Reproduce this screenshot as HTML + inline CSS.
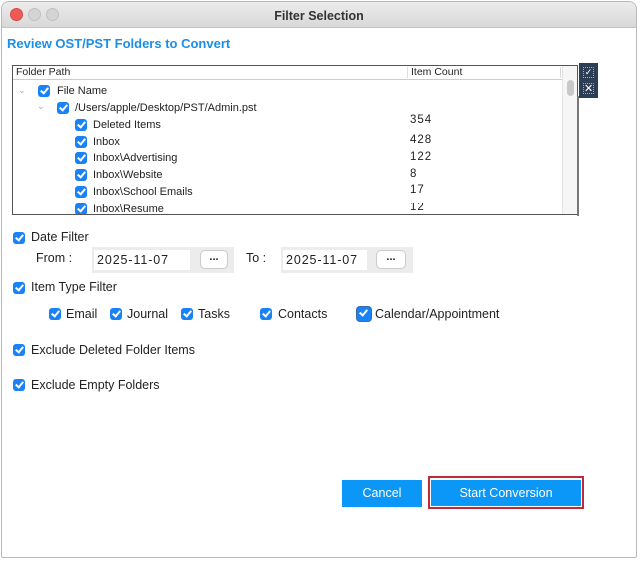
<!DOCTYPE html>
<html><head><meta charset="utf-8"><style>
*{box-sizing:border-box;margin:0;padding:0}
body{width:640px;height:561px;background:#fff;position:relative;overflow:hidden;font-family:"Liberation Sans","DejaVu Sans",sans-serif;color:#222}
.a{position:absolute}
.win{left:1px;top:1px;width:636px;height:557px;border:1px solid #b8b8b8;border-radius:8px 8px 2px 2px;background:#fff;overflow:hidden}
.title{left:0;top:0;width:100%;height:26px;background:linear-gradient(#ececec,#d8d8d8);border-bottom:1px solid #c4c4c4}
.dot{width:13px;height:13px;border-radius:50%;top:6px}
.cb{width:12px;height:12px;border-radius:3px;background:#1a82f7}
.cb::after{content:"";position:absolute;left:3.5px;top:1px;width:3px;height:6px;border:solid #fff;border-width:0 2px 2px 0;transform:rotate(40deg)}
.t{font-size:11px;white-space:nowrap}
.l{font-size:12.5px;white-space:nowrap;color:#222}
.n{font-size:11.5px;letter-spacing:1px;white-space:nowrap}
.d{font-size:12.5px;letter-spacing:.9px;white-space:nowrap}
.btn{background:#0a97f7;color:#fff;font-size:12.5px;text-align:center}
.dots{background:#fff;border:1px solid #ccc;border-radius:5px;font-size:11px;text-align:center;line-height:12px;font-weight:bold}
</style></head><body>
<div class="a win">
 <div class="a title">
  <div class="a dot" style="left:8px;background:#ee5b55;border:1px solid #d44a44"></div>
  <div class="a dot" style="left:26px;background:#d4d4d4;border:1px solid #c0c0c0"></div>
  <div class="a dot" style="left:44px;background:#d4d4d4;border:1px solid #c0c0c0"></div>
  <div class="a" style="left:0;width:100%;top:7px;text-align:center;font-weight:bold;font-size:12.5px;color:#333">Filter Selection</div>
 </div>
</div>
<div class="a" style="left:7px;top:36px;font-weight:bold;font-size:13px;color:#1a8fe8">Review OST/PST Folders to Convert</div>

<div class="a" style="left:12px;top:65px;width:566px;height:150px;border:1px solid #555;background:#fff"></div>
<div class="a" style="left:13px;top:66px;width:549px;height:14px;border-bottom:1px solid #ccc;background:#fff"></div>
<div class="a t" style="left:16px;top:66px;font-size:10.5px">Folder Path</div>
<div class="a" style="left:407px;top:67px;width:1px;height:11px;background:#ddd"></div>
<div class="a t" style="left:411px;top:66px;font-size:10.5px">Item Count</div>
<div class="a" style="left:560px;top:67px;width:1px;height:11px;background:#ddd"></div>
<div class="a" style="left:562px;top:66px;width:15px;height:148px;background:#f6f6f6;border-left:1px solid #e4e4e4"></div>
<div class="a" style="left:567px;top:80px;width:7px;height:16px;border-radius:4px;background:#c8c8c8"></div>
<div class="a" style="left:579px;top:63px;width:19px;height:35px;background:#2c3e55"></div>
<div class="a" style="left:583px;top:67px;width:11px;height:11px;border:1px dotted #aab;color:#fff;font-size:9px;line-height:9px;text-align:center">✓</div>
<div class="a" style="left:583px;top:83px;width:11px;height:11px;border:1px dotted #aab;color:#fff;font-size:11px;line-height:10px;text-align:center;font-weight:bold">✕</div>
<div class="a" style="left:577px;top:96px;width:2px;height:120px;background:#777"></div>

<div class="a t" style="left:18px;top:85px;color:#aaa;font-size:9px">⌄</div>
<div class="a cb" style="left:38px;top:85px"></div><div class="a t" style="left:57px;top:85px">File Name</div>
<div class="a t" style="left:37px;top:101px;color:#aaa;font-size:9px">⌄</div>
<div class="a cb" style="left:57px;top:102px"></div><div class="a t" style="left:75px;top:102px">/Users/apple/Desktop/PST/Admin.pst</div>
<div class="a cb" style="left:75px;top:119px"></div><div class="a t" style="left:93px;top:119px">Deleted Items</div>
<div class="a cb" style="left:75px;top:136px"></div><div class="a t" style="left:93px;top:136px">Inbox</div>
<div class="a cb" style="left:75px;top:152px"></div><div class="a t" style="left:93px;top:152px">Inbox\Advertising</div>
<div class="a cb" style="left:75px;top:169px"></div><div class="a t" style="left:93px;top:169px">Inbox\Website</div>
<div class="a cb" style="left:75px;top:186px"></div><div class="a t" style="left:93px;top:186px">Inbox\School Emails</div>
<div class="a" style="left:14px;top:203px;width:547px;height:11px;overflow:hidden">
 <div class="a cb" style="left:61px;top:0px"></div><div class="a t" style="left:79px;top:0px">Inbox\Resume</div>
 <div class="a n" style="left:396px;top:-2px">12</div>
</div>
<div class="a n" style="left:410px;top:114px">354</div>
<div class="a n" style="left:410px;top:134px">428</div>
<div class="a n" style="left:410px;top:151px">122</div>
<div class="a n" style="left:410px;top:168px">8</div>
<div class="a n" style="left:410px;top:184px">17</div>

<div class="a cb" style="left:13px;top:232px"></div><div class="a l" style="left:31px;top:230px">Date Filter</div>
<div class="a l" style="left:36px;top:251px">From :</div>
<div class="a" style="left:92px;top:247px;width:142px;height:26px;background:#ececec"></div>
<div class="a" style="left:94px;top:250px;width:96px;height:20px;background:#fff"></div>
<div class="a d" style="left:97px;top:253px">2025-11-07</div>
<div class="a dots" style="left:200px;top:250px;width:28px;height:19px;line-height:13px">...</div>
<div class="a l" style="left:246px;top:251px">To :</div>
<div class="a" style="left:281px;top:247px;width:132px;height:26px;background:#ececec"></div>
<div class="a" style="left:283px;top:250px;width:84px;height:20px;background:#fff"></div>
<div class="a d" style="left:286px;top:253px">2025-11-07</div>
<div class="a dots" style="left:376px;top:250px;width:30px;height:19px;line-height:13px">...</div>

<div class="a cb" style="left:13px;top:282px"></div><div class="a l" style="left:31px;top:280px">Item Type Filter</div>
<div class="a cb" style="left:49px;top:308px"></div><div class="a l" style="left:66px;top:307px">Email</div>
<div class="a cb" style="left:110px;top:308px"></div><div class="a l" style="left:127px;top:307px">Journal</div>
<div class="a cb" style="left:181px;top:308px"></div><div class="a l" style="left:198px;top:307px">Tasks</div>
<div class="a cb" style="left:260px;top:308px"></div><div class="a l" style="left:278px;top:307px">Contacts</div>
<div class="a cb" style="left:357px;top:307px;width:14px;height:14px;box-shadow:0 0 0 1px #3a6aa8"></div><div class="a l" style="left:375px;top:307px">Calendar/Appointment</div>

<div class="a cb" style="left:13px;top:344px"></div><div class="a l" style="left:31px;top:343px">Exclude Deleted Folder Items</div>
<div class="a cb" style="left:13px;top:379px"></div><div class="a l" style="left:31px;top:378px">Exclude Empty Folders</div>

<div class="a btn" style="left:342px;top:480px;width:80px;height:27px;line-height:27px">Cancel</div>
<div class="a" style="left:428px;top:476px;width:156px;height:33px;border:2px solid #c0293a"></div>
<div class="a btn" style="left:431px;top:480px;width:150px;height:26px;line-height:26px">Start Conversion</div>
</body></html>
